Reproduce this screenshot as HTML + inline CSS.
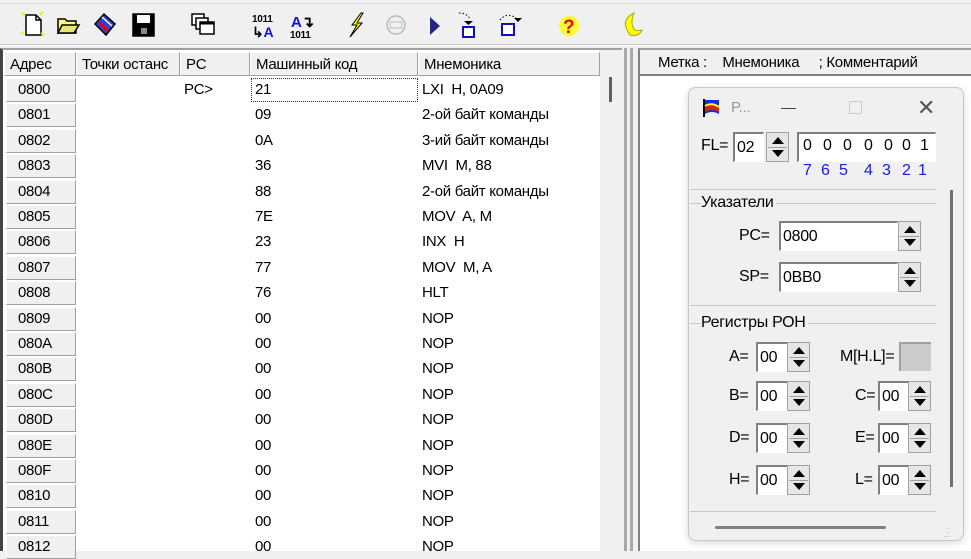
<!DOCTYPE html>
<html><head><meta charset="utf-8"><style>
*{box-sizing:border-box;margin:0;padding:0}
body{width:971px;height:551px;overflow:hidden;background:#f0f0f0;font-family:"Liberation Sans","DejaVu Sans",sans-serif;font-size:15px;color:#000;position:relative;letter-spacing:-0.3px}
.a{position:absolute}
.hd{position:absolute;top:52px;height:24px;background:#f0f0f0;border-top:1px solid #fff;border-left:1px solid #fff;border-right:1px solid #a0a0a0;border-bottom:1px solid #a0a0a0;padding-left:5px;line-height:24px;white-space:nowrap;overflow:hidden}
.r{position:absolute;left:0;width:600px;height:25px;line-height:25px}
.r .ad{position:absolute;left:6px;top:1px;width:70px;height:24px;background:#f0f0f0;border-top:1px solid #fff;border-left:1px solid #fff;border-right:1px solid #a0a0a0;border-bottom:1px solid #a0a0a0;padding-left:11px;line-height:22px}
.r span{position:absolute}
.ed{position:absolute;background:#fff;border-top:2px solid #808080;border-left:2px solid #808080;border-right:1px solid #fff;border-bottom:1px solid #fff;padding-left:2px;font-size:16px;line-height:27px}
.sp{position:absolute;width:23px;background:#e6e6e6;border:1px solid #a0a0a0}
.sp:before{content:"";position:absolute;left:5px;top:4px;border-left:6px solid transparent;border-right:6px solid transparent;border-bottom:7px solid #000}
.sp:after{content:"";position:absolute;left:5px;bottom:4px;border-left:6px solid transparent;border-right:6px solid transparent;border-top:7px solid #000}
.sp i{position:absolute;left:1px;right:1px;top:50%;border-top:1px solid #a0a0a0}
.lb{position:absolute;font-size:16px}
.d{position:absolute;font-size:16px}
</style></head><body>
<div class="a" style="left:0;top:0;width:971px;height:4px;border-bottom:1px solid #d8d8d8"></div>
<div class="a" style="left:0;top:44px;width:971px;height:2px;border-top:1px solid #c8c8c8;border-bottom:1px solid #fff"></div>
<svg class="a" style="left:0;top:0" width="660" height="46">
<g stroke="#000" stroke-width="1.5" fill="none">
<path d="M26 15h10l5 5v15H26z" fill="#fff"/><path d="M36 15v5h5"/>
<path d="M22 13l3 3M43 12l-3 3M21 34l3-2M44 35l-3-2" stroke="#ee0" stroke-width="2"/>
<path d="M58 19h7l2 2h9v12H58z" fill="#ffff80"/><path d="M62 25h17l-5 8H58z" fill="#e8e870"/>
<path d="M95 24l9-10 11 10-9 11z" fill="#3040d0"/><path d="M99 22l9 9" stroke="#e00" stroke-width="2"/><path d="M102 17l10 9" stroke="#fff"/>
<rect x="133" y="14" width="21" height="22" fill="#000"/><rect x="137" y="15" width="13" height="8" fill="#fff" stroke="none"/><rect x="141" y="28" width="6" height="6" fill="#888" stroke="none"/>
<rect x="192" y="14" width="12" height="11" fill="#fff"/><rect x="196" y="18" width="12" height="11" fill="#fff"/><rect x="200" y="22" width="14" height="12" fill="#fff"/><path d="M200 23h14" stroke-width="3"/>
</g>
<text x="252" y="22" font-size="10" font-weight="bold" font-family="Liberation Sans">1011</text>
<text x="252" y="37" font-size="14" font-weight="bold" font-family="Liberation Sans">↳<tspan fill="#1010e0">A</tspan></text>
<text x="291" y="27" font-size="15" font-weight="bold" fill="#1010e0" font-family="Liberation Sans">A<tspan fill="#000">↴</tspan></text>
<text x="290" y="38" font-size="10" font-weight="bold" font-family="Liberation Sans">1011</text>
<path d="M361 13l-9 12h5l-7 12 12-14h-5l6-10z" fill="#ff0" stroke="#000"/>
<circle cx="396" cy="25" r="9" fill="none" stroke="#bbb" stroke-width="1.5"/><rect x="390" y="22" width="12" height="6" fill="none" stroke="#bbb"/>
<path d="M430 17l10 9-10 9z" fill="#202880"/>
<path d="M459 13q8 0 11 6" stroke="#000" stroke-dasharray="1.5 2" fill="none"/><path d="M464 21h9l-4.5 4z"/><rect x="463" y="27" width="11" height="10" fill="#fff" stroke="#1010b0" stroke-width="2"/>
<path d="M500 20q8-9 17-1" stroke="#000" stroke-dasharray="1.5 2" fill="none"/><path d="M514 18h8l-4 4z"/><rect x="502" y="24" width="12" height="11" fill="#fff" stroke="#1010b0" stroke-width="2"/>
<circle cx="569" cy="26" r="10" fill="#ff0" opacity=".8"/><text x="563" y="33" font-size="19" font-weight="bold" fill="#e00" font-family="Liberation Sans">?</text>
<path d="M634 13q-15 7-4 22q9 2 12-5q-10 3-10-8q0-5 2-9z" fill="#ff0" stroke="#aa0"/>
</svg>
<div class="a" style="left:0;top:48px;width:622px;height:503px;background:#fff;border-left:3px solid #444;border-top:2px solid #a0a0a0"></div>
<div class="a" style="left:600px;top:50px;width:22px;height:501px;background:#f0f0f0"></div>
<div class="a" style="left:609px;top:77px;width:3px;height:25px;background:#606060"></div>
<div class="hd" style="left:4px;width:72px">Адрес</div>
<div class="hd" style="left:76px;width:104px">Точки останс</div>
<div class="hd" style="left:180px;width:70px">PC</div>
<div class="hd" style="left:250px;width:168px">Машинный код</div>
<div class="hd" style="left:418px;width:182px">Мнемоника</div>
<div class="a" style="left:251px;top:78px;width:167px;height:24px;border:1px dotted #333"></div>
<div class="r" style="top:77px"><div class="ad">0800</div><span style="left:184px">PC&gt;</span><span style="left:255px">21</span><span style="left:422px">LXI&nbsp; H, 0A09</span></div>
<div class="r" style="top:102px"><div class="ad">0801</div><span style="left:255px">09</span><span style="left:422px">2-ой байт команды</span></div>
<div class="r" style="top:128px"><div class="ad">0802</div><span style="left:255px">0A</span><span style="left:422px">3-ий байт команды</span></div>
<div class="r" style="top:153px"><div class="ad">0803</div><span style="left:255px">36</span><span style="left:422px">MVI&nbsp; M, 88</span></div>
<div class="r" style="top:179px"><div class="ad">0804</div><span style="left:255px">88</span><span style="left:422px">2-ой байт команды</span></div>
<div class="r" style="top:204px"><div class="ad">0805</div><span style="left:255px">7E</span><span style="left:422px">MOV&nbsp; A, M</span></div>
<div class="r" style="top:229px"><div class="ad">0806</div><span style="left:255px">23</span><span style="left:422px">INX&nbsp; H</span></div>
<div class="r" style="top:255px"><div class="ad">0807</div><span style="left:255px">77</span><span style="left:422px">MOV&nbsp; M, A</span></div>
<div class="r" style="top:280px"><div class="ad">0808</div><span style="left:255px">76</span><span style="left:422px">HLT</span></div>
<div class="r" style="top:306px"><div class="ad">0809</div><span style="left:255px">00</span><span style="left:422px">NOP</span></div>
<div class="r" style="top:331px"><div class="ad">080A</div><span style="left:255px">00</span><span style="left:422px">NOP</span></div>
<div class="r" style="top:356px"><div class="ad">080B</div><span style="left:255px">00</span><span style="left:422px">NOP</span></div>
<div class="r" style="top:382px"><div class="ad">080C</div><span style="left:255px">00</span><span style="left:422px">NOP</span></div>
<div class="r" style="top:407px"><div class="ad">080D</div><span style="left:255px">00</span><span style="left:422px">NOP</span></div>
<div class="r" style="top:433px"><div class="ad">080E</div><span style="left:255px">00</span><span style="left:422px">NOP</span></div>
<div class="r" style="top:458px"><div class="ad">080F</div><span style="left:255px">00</span><span style="left:422px">NOP</span></div>
<div class="r" style="top:483px"><div class="ad">0810</div><span style="left:255px">00</span><span style="left:422px">NOP</span></div>
<div class="r" style="top:509px"><div class="ad">0811</div><span style="left:255px">00</span><span style="left:422px">NOP</span></div>
<div class="r" style="top:534px"><div class="ad">0812</div><span style="left:255px">00</span><span style="left:422px">NOP</span></div>
<div class="a" style="left:624px;top:48px;width:3px;height:503px;background:#a8a8a8"></div>
<div class="a" style="left:630px;top:48px;width:3px;height:503px;background:#a8a8a8"></div>
<div class="a" style="left:638px;top:48px;width:333px;height:503px;background:#fff;border-left:2px solid #808080;border-top:2px solid #a0a0a0"></div>
<div class="a" style="left:640px;top:50px;width:331px;height:26px;background:#f0f0f0;border-bottom:2px solid #808080;line-height:26px;padding-left:18px;white-space:nowrap">Метка :&nbsp;&nbsp;&nbsp; Мнемоника&nbsp;&nbsp;&nbsp;&nbsp; ; Комментарий</div>
<div class="a" style="left:688px;top:87px;width:276px;height:454px;background:#f0f0f0;border:1px solid #c8c8c8;border-radius:8px;box-shadow:0 2px 8px rgba(0,0,0,.15)"></div>
<svg class="a" style="left:700px;top:96px" width="24" height="24"><path d="M4 3v18" stroke="#000" stroke-width="2"/><path d="M5 4h14v14q-7-4-14 0z" fill="#1030e0"/><path d="M5 12q7-5 14 0v4q-7-4-14 0z" fill="#e02010"/><path d="M5 10q7-4 14 1" stroke="#ff0" stroke-width="2" fill="none"/></svg>
<div class="a" style="left:731px;top:99px;color:#999;font-size:15px">P...</div>
<div class="a" style="left:781px;top:108px;width:15px;height:1px;background:#444"></div>
<div class="a" style="left:849px;top:101px;width:13px;height:13px;border:1px solid #ccc"></div>
<div class="a" style="left:917px;top:99px;font-size:22px;color:#555;line-height:18px">✕</div>
<div class="a" style="left:690px;top:130px;width:246px;height:60px;border-bottom:1px solid #c8c8c8"></div>
<div class="lb" style="left:701px;top:137px">FL=</div>
<div class="ed" style="left:733px;top:132px;width:31px;height:30px">02</div>
<div class="sp" style="left:766px;top:132px;height:30px"><i></i></div>
<div class="ed" style="left:797px;top:132px;width:139px;height:30px"></div>
<div class="d" style="left:803px;top:137px">0</div><div class="d" style="left:823px;top:137px">0</div><div class="d" style="left:843px;top:137px">0</div><div class="d" style="left:864px;top:137px">0</div><div class="d" style="left:884px;top:137px">0</div><div class="d" style="left:902px;top:137px">0</div><div class="d" style="left:920px;top:137px">1</div>
<div style="color:#1a1ae0"><div class="d" style="left:803px;top:162px">7</div><div class="d" style="left:821px;top:162px">6</div><div class="d" style="left:839px;top:162px">5</div><div class="d" style="left:864px;top:162px">4</div><div class="d" style="left:882px;top:162px">3</div><div class="d" style="left:902px;top:162px">2</div><div class="d" style="left:918px;top:162px">1</div></div>
<div class="a" style="left:950px;top:190px;width:3px;height:297px;background:#707070"></div>
<div class="a" style="left:690px;top:203px;width:246px;height:103px;border:1px solid #c8c8c8;border-left:none;border-right:none"></div>
<div class="lb" style="left:701px;top:194px;background:#f0f0f0;padding-right:2px">Указатели</div>
<div class="lb" style="left:739px;top:227px">PC=</div>
<div class="ed" style="left:779px;top:221px;width:119px;height:30px">0800</div>
<div class="sp" style="left:898px;top:221px;height:30px"><i></i></div>
<div class="lb" style="left:739px;top:268px">SP=</div>
<div class="ed" style="left:779px;top:262px;width:119px;height:30px">0BB0</div>
<div class="sp" style="left:898px;top:262px;height:30px"><i></i></div>
<div class="a" style="left:690px;top:323px;width:246px;height:189px;border:1px solid #c8c8c8;border-left:none;border-right:none"></div>
<div class="lb" style="left:701px;top:314px;background:#f0f0f0;padding-right:2px">Регистры РОН</div>
<div class="lb" style="left:729px;top:348px">A=</div><div class="ed" style="left:756px;top:342px;width:32px;height:30px">00</div><div class="sp" style="left:787px;top:342px;height:30px"><i></i></div>
<div class="lb" style="left:840px;top:348px">M[H.L]=</div><div class="a" style="left:899px;top:342px;width:32px;height:29px;background:#ccc;border-top:2px solid #a0a0a0;border-left:2px solid #a0a0a0"></div>
<div class="lb" style="left:729px;top:387px">B=</div><div class="ed" style="left:756px;top:381px;width:32px;height:30px">00</div><div class="sp" style="left:787px;top:381px;height:30px"><i></i></div>
<div class="lb" style="left:855px;top:387px">C=</div><div class="ed" style="left:878px;top:381px;width:31px;height:30px">00</div><div class="sp" style="left:908px;top:381px;height:30px"><i></i></div>
<div class="lb" style="left:729px;top:429px">D=</div><div class="ed" style="left:756px;top:423px;width:32px;height:30px">00</div><div class="sp" style="left:787px;top:423px;height:30px"><i></i></div>
<div class="lb" style="left:855px;top:429px">E=</div><div class="ed" style="left:878px;top:423px;width:31px;height:30px">00</div><div class="sp" style="left:908px;top:423px;height:30px"><i></i></div>
<div class="lb" style="left:729px;top:471px">H=</div><div class="ed" style="left:756px;top:465px;width:32px;height:30px">00</div><div class="sp" style="left:787px;top:465px;height:30px"><i></i></div>
<div class="lb" style="left:855px;top:471px">L=</div><div class="ed" style="left:878px;top:465px;width:31px;height:30px">00</div><div class="sp" style="left:908px;top:465px;height:30px"><i></i></div>
<div class="a" style="left:715px;top:526px;width:171px;height:3px;background:#808080;border-radius:2px"></div>
<div class="a" style="left:944px;top:525px;color:#aaa;font-size:8px;line-height:4px">&nbsp;&nbsp;.<br>&nbsp;..<br>...</div>
</body></html>
